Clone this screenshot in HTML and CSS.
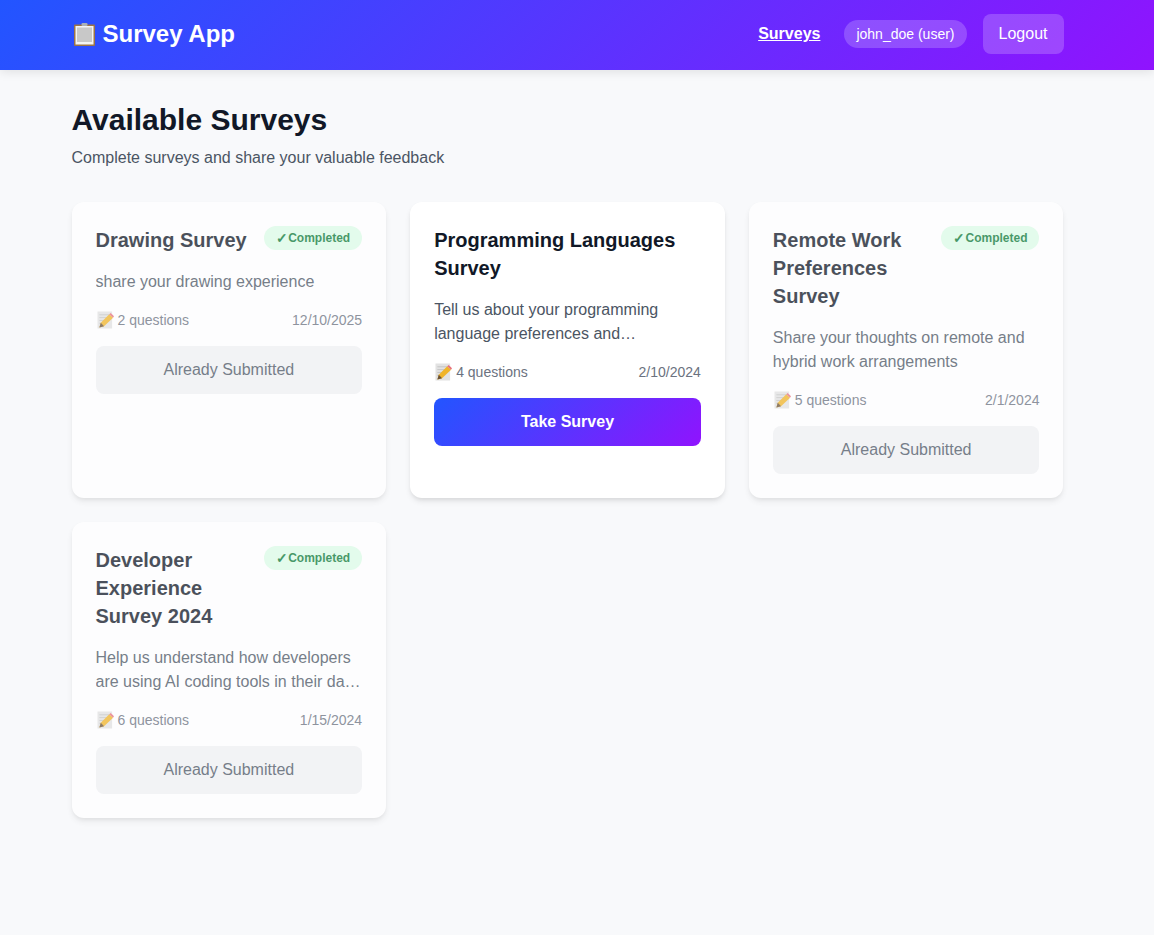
FILE: index.html
```html
<!DOCTYPE html>
<html lang="en">
<head>
    <meta charset="UTF-8">
    <title>Survey App</title>
    <meta name="viewport" content="width=device-width, initial-scale=1.0">
    <link rel="stylesheet" href="styles.css">
</head>
<body>
    <svg class="sprites" width="0" height="0">
        <symbol id="clipboard" viewBox="0 0 21 23">
            <rect x="0" y="1.5" width="21" height="21.5" rx="1" fill="#9c7446"/>
            <rect x="1.5" y="3" width="18" height="18.5" fill="#f4f4f4"/>
            <rect x="3" y="4.5" width="15" height="14.5" fill="#c8c8c8"/>
            <rect x="7.5" y="0" width="6" height="3" rx="1" fill="#a9b0b8"/>
        </symbol>
        <symbol id="memo" viewBox="0 0 18 19">
            <rect x="0.5" y="0.5" width="15.5" height="18" fill="#e2e2e2"/>
            <path d="M2.5 4h11M2.5 7h11M2.5 10h6M2.5 13h4" stroke="#c2c2c2" stroke-width="1" fill="none"/>
            <path d="M2.5 17.5 L4 12.5 L13 3.5 L17 7 L7.5 16 Z" fill="#f0b429"/>
            <path d="M13 3.5 L14.5 2 L18 5.5 L17 7 Z" fill="#e8707c"/>
            <path d="M2.5 17.5 L4 12.5 L7.5 16 Z" fill="#6a5238"/>
        </symbol>
    </svg>

    <header class="topbar">
        <div class="topbar-inner">
            <div class="brand">
                <svg class="brand-icon"><use href="#clipboard"/></svg>
                <span>Survey App</span>
            </div>
            <nav class="nav">
                <a class="nav-link" href="#">Surveys</a>
                <span class="user-badge">john_doe (user)</span>
                <button class="logout">Logout</button>
            </nav>
        </div>
    </header>

    <main class="content">
        <h1 class="page-title">Available Surveys</h1>
        <p class="page-sub">Complete surveys and share your valuable feedback</p>

        <div class="survey-grid">
            <article class="card done">
                <div class="card-head">
                    <h2>Drawing Survey</h2>
                    <span class="status"><span class="check">✓</span>Completed</span>
                </div>
                <p class="desc">share your drawing experience</p>
                <div class="meta">
                    <span class="count"><svg class="memo"><use href="#memo"/></svg>2 questions</span>
                    <span>12/10/2025</span>
                </div>
                <button class="action submitted">Already Submitted</button>
            </article>

            <article class="card">
                <div class="card-head">
                    <h2>Programming Languages Survey</h2>
                </div>
                <p class="desc">Tell us about your programming language preferences and experience with modern tools</p>
                <div class="meta">
                    <span class="count"><svg class="memo"><use href="#memo"/></svg>4 questions</span>
                    <span>2/10/2024</span>
                </div>
                <button class="action take">Take Survey</button>
            </article>

            <article class="card done">
                <div class="card-head">
                    <h2>Remote Work Preferences Survey</h2>
                    <span class="status"><span class="check">✓</span>Completed</span>
                </div>
                <p class="desc">Share your thoughts on remote and hybrid work arrangements</p>
                <div class="meta">
                    <span class="count"><svg class="memo"><use href="#memo"/></svg>5 questions</span>
                    <span>2/1/2024</span>
                </div>
                <button class="action submitted">Already Submitted</button>
            </article>

            <article class="card done">
                <div class="card-head">
                    <h2>Developer Experience Survey 2024</h2>
                    <span class="status"><span class="check">✓</span>Completed</span>
                </div>
                <p class="desc">Help us understand how developers are using AI coding tools in their daily workflow and projects</p>
                <div class="meta">
                    <span class="count"><svg class="memo"><use href="#memo"/></svg>6 questions</span>
                    <span>1/15/2024</span>
                </div>
                <button class="action submitted">Already Submitted</button>
            </article>
        </div>
    </main>
</body>
</html>
```

FILE: styles.css
```css
* {
    box-sizing: border-box;
}

html, body {
    overflow-x: hidden;
}

body {
    margin: 0;
    min-height: 935px;
    background: #f8f9fb;
    color: #111827;
    font-family: "Liberation Sans", Arial, sans-serif;
}

.sprites {
    display: block;
}

.topbar {
    height: 70px;
    padding: 0 0 2px 71.5px;
    background: linear-gradient(135deg, #2255ff 0%, #9013fe 100%);
    box-shadow: 0 2px 10px rgba(0, 0, 0, 0.1);
}

.topbar-inner {
    display: flex;
    align-items: center;
    justify-content: space-between;
    width: 992px;
    height: 100%;
}

.brand {
    display: flex;
    align-items: center;
    gap: 8px;
    color: #fff;
    font-size: 24px;
    font-weight: 700;
}

.brand-icon {
    width: 21px;
    height: 23px;
    margin-left: 2px;
}

.nav {
    display: flex;
    align-items: center;
    gap: 16px;
}

.nav-link {
    margin-right: 8px;
    color: #fff;
    font-size: 16px;
    font-weight: 700;
}

.user-badge {
    height: 28px;
    padding: 0 12px;
    border-radius: 14px;
    background: rgba(255, 255, 255, 0.2);
    color: #fff;
    font-size: 14px;
    line-height: 28px;
}

.logout {
    width: 81px;
    height: 40px;
    padding: 0;
    border: 0;
    border-radius: 8px;
    background: rgba(255, 255, 255, 0.2);
    color: #fff;
    font-family: inherit;
    font-size: 16px;
}

.content {
    width: 992px;
    margin-left: 71.5px;
    padding-top: 32px;
}

.page-title {
    margin: 0;
    font-size: 30px;
    line-height: 36px;
    font-weight: 700;
}

.page-sub {
    margin: 8px 0 0;
    color: #4b5563;
    font-size: 16px;
    line-height: 24px;
}

.survey-grid {
    display: grid;
    grid-template-columns: repeat(3, 1fr);
    gap: 24px;
    margin-top: 32px;
}

.card {
    padding: 24px;
    border-radius: 12px;
    background: #fff;
    box-shadow: 0 4px 6px -1px rgba(0, 0, 0, 0.1), 0 2px 4px -1px rgba(0, 0, 0, 0.06);
}

.card.done {
    opacity: 0.75;
}

.card-head {
    display: flex;
    align-items: flex-start;
    justify-content: space-between;
    gap: 12px;
    margin-bottom: 16px;
}

.card-head h2 {
    margin: 0;
    font-size: 20px;
    line-height: 28px;
    font-weight: 700;
}

.status {
    display: flex;
    flex-shrink: 0;
    height: 24px;
    padding: 0 12px;
    border-radius: 12px;
    background: #dcfce7;
    color: #0b7a38;
    font-size: 12px;
    font-weight: 700;
    line-height: 24px;
}

.check {
    width: 12.5px;
    font-size: 14px;
}

.desc {
    display: -webkit-box;
    margin: 0 0 16px;
    overflow: hidden;
    color: #4b5563;
    font-size: 16px;
    line-height: 24px;
    -webkit-box-orient: vertical;
    -webkit-line-clamp: 2;
}

.meta {
    display: flex;
    align-items: center;
    justify-content: space-between;
    margin-bottom: 16px;
    color: #6b7280;
    font-size: 14px;
    line-height: 20px;
}

.count {
    display: flex;
    align-items: center;
    gap: 5px;
}

.memo {
    width: 17px;
    height: 18px;
    margin-left: 1px;
    margin-right: -1px;
}

.action {
    display: block;
    width: 100%;
    height: 48px;
    border: 0;
    border-radius: 8px;
    font-family: inherit;
    font-size: 16px;
}

.submitted {
    background: #f0f1f4;
    color: #4b5563;
}

.take {
    background: linear-gradient(135deg, #2255ff 0%, #9013fe 100%);
    color: #fff;
    font-weight: 700;
}
```
